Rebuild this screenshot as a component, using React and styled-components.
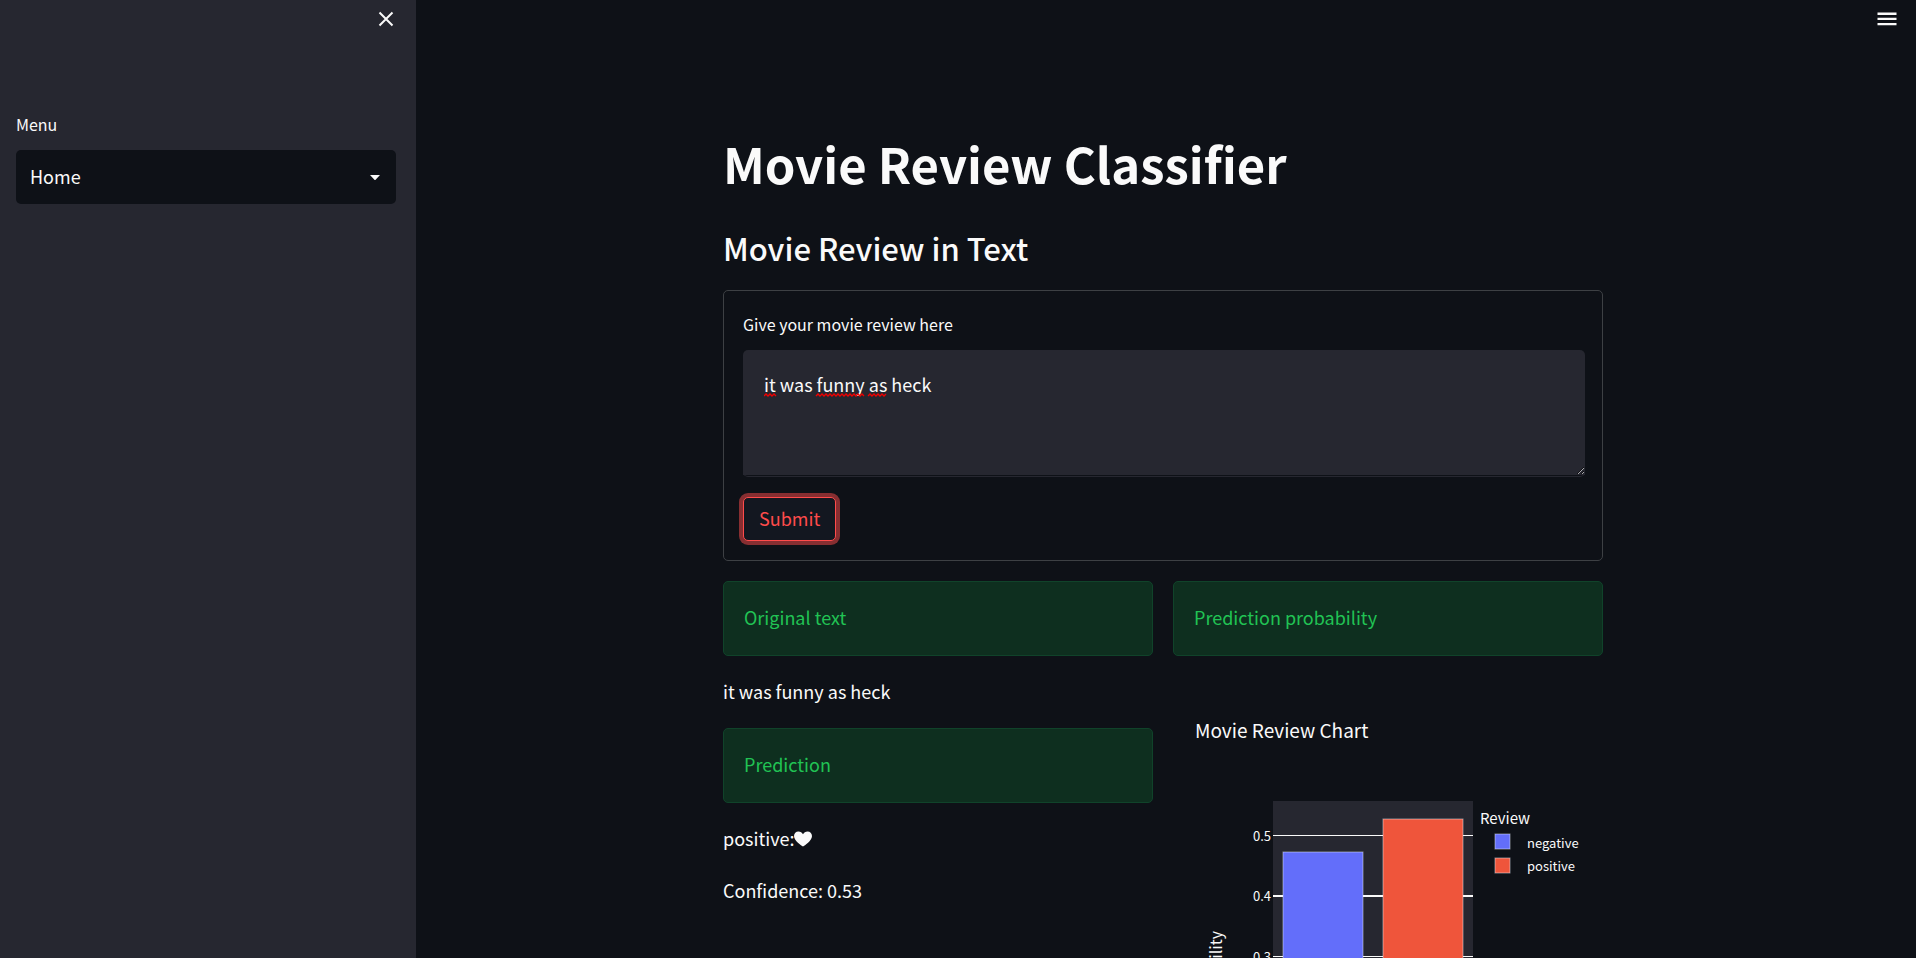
import React, { useState } from "react";
import styled, { createGlobalStyle } from "styled-components";

const color = {
  page: "#0e1117",
  panel: "#262730",
  text: "#fafafa",
  line: "#3d4044",
  accent: "#ff4b4b",
  green: "#21c354",
};

const GlobalStyle = createGlobalStyle`
  *, *::before, *::after { box-sizing: border-box; }
  body {
    margin: 0;
    background: ${color.page};
    color: ${color.text};
    font-family: "Noto Sans CJK JP", "Noto Sans", sans-serif;
    font-size: 18px;
    line-height: 32px;
  }
  button, select, textarea { font: inherit; color: inherit; }
`;

const Shell = styled.div`
  display: flex;
  height: 100vh;
`;

const Sidebar = styled.aside`
  flex: 0 0 416px;
  background: ${color.panel};
  padding: 0 20px 0 16px;
`;

const SidebarTop = styled.div`
  display: flex;
  justify-content: flex-end;
  height: 111px;
`;

const IconButton = styled.button`
  display: flex;
  align-items: center;
  justify-content: center;
  width: 20px;
  height: 38px;
  padding: 0;
  border: 0;
  background: none;
  cursor: pointer;
`;

const Label = styled.label`
  display: block;
  margin-bottom: 13px;
  font-size: 16px;
  line-height: 26px;
`;

const SelectBox = styled.div`
  position: relative;
`;

const Select = styled.select`
  display: block;
  appearance: none;
  width: 100%;
  height: 54px;
  padding: 0 40px 2px 14px;
  border: 0;
  border-radius: 5px;
  background: ${color.page};
`;

const Caret = styled.svg`
  position: absolute;
  right: 16px;
  top: 25px;
  pointer-events: none;
`;

const Main = styled.main`
  flex: 1;
  min-width: 0;
  padding: 0 24px 0 18px;
  overflow-y: auto;
  scrollbar-width: none;
`;

const TopBar = styled.header`
  display: flex;
  justify-content: flex-end;
  height: 118px;
  margin-right: -5px;
`;

const Content = styled.div`
  max-width: 880px;
  margin: 0 auto;
`;

const Title = styled.h1`
  margin: 0;
  padding: 12px 0;
  font-size: 49px;
  font-weight: 700;
  line-height: 66px;
`;

const Subtitle = styled.h2`
  margin: 0;
  padding: 20px 0 22px;
  font-size: 31px;
  font-weight: 500;
  line-height: 40px;
`;

const Form = styled.form`
  margin-bottom: 20px;
  padding: 20px 17px 19px 19px;
  border: 1px solid ${color.line};
  border-radius: 5px;
`;

const TextBox = styled.div`
  position: relative;
  margin-bottom: 20px;
  border-bottom: 1px solid ${color.panel};
  border-radius: 5px;
`;

const TextArea = styled.textarea`
  display: block;
  width: 100%;
  height: 125px;
  margin-bottom: 1px;
  padding: 18px 21px;
  border: 0;
  border-radius: 5px 5px 0 0;
  outline: 0;
  background: ${color.panel};
  resize: vertical;
`;

const SpellingMarks = styled.svg`
  position: absolute;
  left: 21px;
  top: 43px;
  pointer-events: none;
`;

const SubmitButton = styled.button`
  display: block;
  height: 44px;
  padding: 0 15px 2px;
  border: 1px solid ${color.accent};
  border-radius: 5px;
  background: #131720;
  box-shadow: 0 0 0 4px rgba(255, 75, 75, 0.5);
  color: ${color.accent};
  cursor: pointer;
`;

const Columns = styled.div`
  display: grid;
  grid-template-columns: 1fr 1fr;
  gap: 20px;
`;

const Column = styled.section`
  display: flex;
  flex-direction: column;
  gap: 20px;
  min-width: 0;
`;

const Alert = styled.div`
  padding: 19px 20px 22px;
  border: 1px solid #10432a;
  border-radius: 5px;
  background: #0e2f1f;
  color: ${color.green};
`;

const Text = styled.p`
  margin: 0;
  padding-bottom: 2px;
  line-height: 30px;
`;

const Heart = styled.svg`
  vertical-align: -1px;
`;

const Chart = styled.svg`
  display: block;
  width: 100%;
  height: auto;
  fill: ${color.text};
`;

const ChartText = styled.text`
  font-size: ${(p) => p.$size}px;
`;

const PLOT = { left: 100, right: 300, top: 125, bottom: 463 };
const STEP = 605 / 10;
const TICKS = [0, 1, 2, 3, 4, 5];
const BARS = [
  { name: "negative", value: 0.472, fill: "#636efa", x: 110 },
  { name: "positive", value: 0.528, fill: "#ef553b", x: 210 },
];

function squiggle(from, to) {
  let d = `M${from} 3`;
  for (let x = from, up = true; x + 2 <= to; x += 2, up = !up) {
    d += ` l2 ${up ? -2 : 2}`;
  }
  return d;
}

function ReviewChart() {
  return (
    <Chart viewBox="0 0 430 562" role="img" aria-label="Movie Review Chart">
      <ChartText $size={19} x="22" y="62">Movie Review Chart</ChartText>
      <rect x={PLOT.left} y={PLOT.top} width={PLOT.right - PLOT.left} height={PLOT.bottom - PLOT.top} fill={color.panel} />
      {TICKS.map((t) => {
        const y = Math.round(PLOT.bottom - 2 - t * STEP);
        return (
          <g key={t}>
            <rect x={PLOT.left} y={y} width={PLOT.right - PLOT.left} height={t === 4 ? 2 : 1} />
            <ChartText $size={13} x="98" y={y + 6} textAnchor="end">{t === 0 ? "0" : `0.${t}`}</ChartText>
          </g>
        );
      })}
      {BARS.map((b) => {
        const h = Math.round(b.value * 10 * STEP);
        return (
          <rect
            key={b.name}
            x={b.x}
            y={PLOT.bottom - h - 1}
            width="80"
            height={h}
            fill={b.fill}
            stroke="#e5ecf6"
            strokeOpacity="0.5"
          />
        );
      })}
      <ChartText $size={16} textAnchor="middle" transform="translate(49 296) rotate(-90)">Probability</ChartText>
      <ChartText $size={15} x="307" y="148">Review</ChartText>
      {BARS.map((b, i) => (
        <g key={b.name}>
          <rect x="322" y={158 + i * 24} width="15" height="15" fill={b.fill} stroke="#e5ecf6" strokeOpacity="0.5" />
          <ChartText $size={13} x="354" y={172 + i * 23}>{b.name}</ChartText>
        </g>
      ))}
    </Chart>
  );
}

export default function App() {
  const [review, setReview] = useState("it was funny as heck");
  return (
    <>
      <GlobalStyle />
      <Shell>
        <Sidebar>
          <SidebarTop>
            <IconButton type="button" aria-label="Close sidebar">
              <svg width="16" height="16" viewBox="0 0 16 16" stroke={color.text} strokeWidth="2">
                <path d="M1.5 1.5 14.5 14.5M14.5 1.5 1.5 14.5" />
              </svg>
            </IconButton>
          </SidebarTop>
          <Label htmlFor="menu">Menu</Label>
          <SelectBox>
            <Select id="menu" defaultValue="Home">
              <option>Home</option>
            </Select>
            <Caret width="10" height="5" viewBox="0 0 10 5">
              <path d="M0 0h10L5.8 4.6a1 1 0 0 1-1.6 0z" fill={color.text} />
            </Caret>
          </SelectBox>
        </Sidebar>
        <Main>
          <TopBar>
            <IconButton type="button" aria-label="Main menu">
              <svg width="20" height="14" viewBox="0 0 20 14" fill={color.text}>
                <path d="M0.5 0.5h19v2.4h-19zM0.5 5.7h19v2.4h-19zM0.5 10.9h19v2.4h-19z" />
              </svg>
            </IconButton>
          </TopBar>
          <Content>
            <Title>Movie Review Classifier</Title>
            <Subtitle>Movie Review in Text</Subtitle>
            <Form onSubmit={(e) => e.preventDefault()}>
              <Label htmlFor="review">Give your movie review here</Label>
              <TextBox>
                <TextArea id="review" spellCheck={false} value={review} onChange={(e) => setReview(e.target.value)} />
                <SpellingMarks width="126" height="5" fill="none" stroke="#f00000" strokeWidth="1.4">
                  <path d={squiggle(0, 12)} />
                  <path d={squiggle(52, 100)} />
                  <path d={squiggle(104, 122)} />
                </SpellingMarks>
              </TextBox>
              <SubmitButton type="submit">Submit</SubmitButton>
            </Form>
            <Columns>
              <Column>
                <Alert>Original text</Alert>
                <Text>it was funny as heck</Text>
                <Alert>Prediction</Alert>
                <Text>
                  positive:
                  <Heart width="18" height="16" viewBox="0 0 18 16" role="img" aria-label="heart">
                    <path
                      d="M9 15.5C7.5 14.4 0 9.6 0 4.9 0 2.2 2 .4 4.4.4 6.5.4 8.2 1.6 9 3.2 9.8 1.6 11.5.4 13.6.4 16 .4 18 2.2 18 4.9 18 9.6 10.5 14.4 9 15.5Z"
                      fill={color.text}
                    />
                  </Heart>
                </Text>
                <Text>Confidence: 0.53</Text>
              </Column>
              <Column>
                <Alert>Prediction probability</Alert>
                <ReviewChart />
              </Column>
            </Columns>
          </Content>
        </Main>
      </Shell>
    </>
  );
}
